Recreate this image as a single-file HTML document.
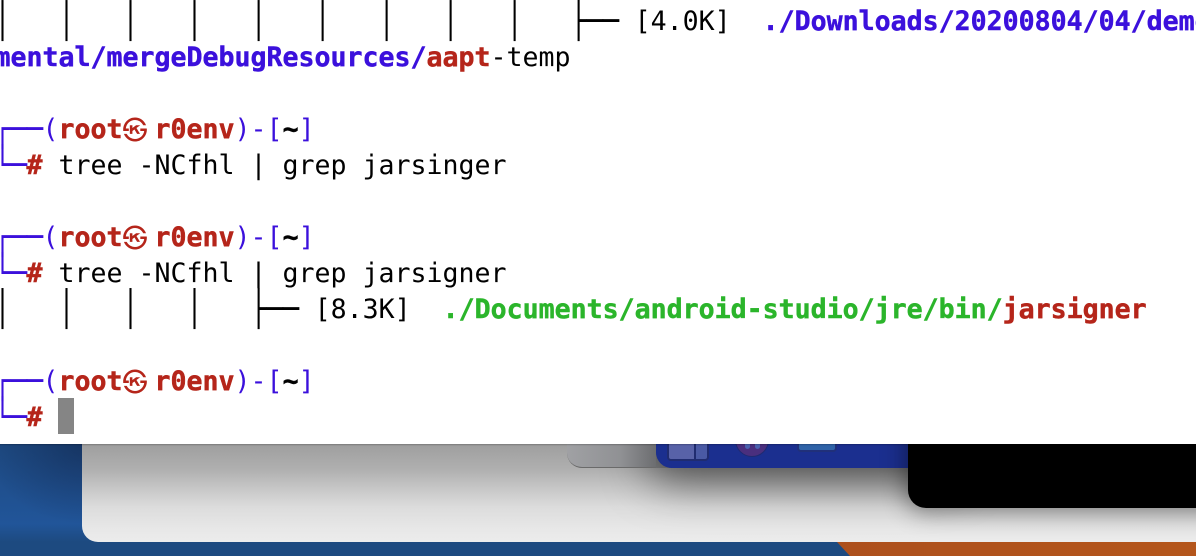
<!DOCTYPE html>
<html><head><meta charset="utf-8">
<style>
html,body{margin:0;padding:0;width:1196px;height:556px;overflow:hidden;background:#1f4a82}
.abs{position:absolute}
#blue{left:0;top:444px;width:1196px;height:112px;background:radial-gradient(ellipse 100px 80px at 85px 0,rgba(10,20,50,.4),rgba(10,20,50,0)),linear-gradient(180deg,#1e4a82 0,#215599 80px,#1d4a80 98px)}
#orange{left:0;top:542px;width:1196px;height:14px;background:linear-gradient(90deg,#9c421f,#b4561c);clip-path:polygon(837px 0,1196px 0,1196px 14px,850px 14px)}
#card{left:82px;top:380px;width:1200px;height:162px;border-radius:16px;overflow:hidden;background:linear-gradient(180deg,#9e9e9e 0,#9e9e9e 64px,#b0b0b0 90px,#c5c5c5 107px,#dcdcdc 127px,#e8e8e8 150px,#ececec 162px)}
#win{left:-20px;top:-20px;width:1300px;height:464px;background:#fff;border-radius:0 0 10px 10px;box-shadow:0 0 2px rgba(0,0,0,.55)}
.t{position:absolute;left:-5.5px;white-space:pre;height:36px;font:26.6px/36px "DejaVu Sans Mono","Liberation Mono",monospace;color:#000;letter-spacing:-.01px}
.b{font-weight:bold;-webkit-text-stroke:.45px currentColor}
.p{color:#3b10dc}.r{color:#b5251a}.g{color:#2bb52b}
.bx{display:inline-block;width:16px;transform:scaleY(1.3);font-weight:normal}
.bx.h{transform:scale(1.02,1.3)}
.k{display:inline-block;width:32px;height:0;text-align:left;font:bold 25px/0 "Noto Sans CJK JP",sans-serif;color:#b5251a;letter-spacing:0;text-indent:0;position:relative;top:1px}
#cur{left:58px;top:398px;width:16px;height:36px;background:#858585}
</style></head><body>
<div class="abs" id="blue"></div>
<div class="abs" id="orange"></div>
<div class="abs" id="card">
  <div class="abs" style="left:486px;top:-20px;width:400px;height:108px;border-radius:15px;background:#8e8f92"></div>
  <div class="abs" style="left:574px;top:-20px;width:300px;height:108px;border-radius:16px;background:#1b2f8f;box-shadow:0 6px 44px 8px rgba(0,0,0,.55)"></div>
  <div class="abs" style="left:485px;top:-20px;width:89px;height:108px;border-radius:15px 0 0 15px;background:linear-gradient(90deg,#a0a1a4,#909194 60%,#6c6d70);border-bottom:1px solid #6a6a6a;box-sizing:border-box"></div>
  <div class="abs" style="left:574px;top:-20px;width:30px;height:108px;border-radius:16px 0 0 16px;background:#1b2f8f"></div>
  <div class="abs" style="left:585px;top:40px;width:42px;height:41px;box-sizing:border-box;border:2px solid #202c70;border-radius:4px;background:linear-gradient(90deg,#5862a8 0,#5862a8 66%,#202c70 66%,#202c70 71%,#4a5aa5 71%)"></div>
  <div class="abs" style="left:653px;top:43px;width:34px;height:34px;border-radius:50%;background:#4a2f7e;box-sizing:border-box;border:1px solid #1f2a70"></div>
  <div class="abs" style="left:663px;top:60px;width:5px;height:9px;border-radius:3px;background:#4a62b0"></div>
  <div class="abs" style="left:673px;top:60px;width:5px;height:9px;border-radius:3px;background:#4a62b0"></div>
  <div class="abs" style="left:715px;top:40px;width:40px;height:32px;box-sizing:border-box;border:2px solid #20307a;border-radius:4px;background:#2f63a8"></div>
  <div class="abs" style="left:826px;top:-20px;width:420px;height:148px;border-radius:18px;background:#000;box-shadow:0 2px 24px 2px rgba(0,0,0,.45)"></div>
</div>
<div class="abs" id="win"></div>
<div class="t" style="top:4px"><span class="bx">│</span>   <span class="bx">│</span>   <span class="bx">│</span>   <span class="bx">│</span>   <span class="bx">│</span>   <span class="bx">│</span>   <span class="bx">│</span>   <span class="bx">│</span>   <span class="bx">│</span>   <span class="bx">├</span><span class="bx h">─</span><span class="bx h">─</span> [4.0K]  <span class="b p">./Downloads/20200804/04/demo</span></div>
<div class="t" style="top:40px"><span class="b p">mental/mergeDebugResources/</span><span class="b r">aapt</span>-temp</div>
<div class="t" style="top:112px"><span class="bx p">┌</span><span class="bx h p">─</span><span class="bx h p">─</span><span class="p">(</span><span class="b r">root</span><span class="k">㉿</span><span class="b r">r0env</span><span class="p">)-[</span><span class="b">~</span><span class="p">]</span></div>
<div class="t" style="top:148px"><span class="bx p">└</span><span class="bx h p">─</span><span class="b r">#</span> tree -NCfhl | grep jarsinger</div>
<div class="t" style="top:220px"><span class="bx p">┌</span><span class="bx h p">─</span><span class="bx h p">─</span><span class="p">(</span><span class="b r">root</span><span class="k">㉿</span><span class="b r">r0env</span><span class="p">)-[</span><span class="b">~</span><span class="p">]</span></div>
<div class="t" style="top:256px"><span class="bx p">└</span><span class="bx h p">─</span><span class="b r">#</span> tree -NCfhl | grep jarsigner</div>
<div class="t" style="top:292px"><span class="bx">│</span>   <span class="bx">│</span>   <span class="bx">│</span>   <span class="bx">│</span>   <span class="bx">├</span><span class="bx h">─</span><span class="bx h">─</span> [8.3K]  <span class="b g">./Documents/android-studio/jre/bin/</span><span class="b r">jarsigner</span></div>
<div class="t" style="top:364px"><span class="bx p">┌</span><span class="bx h p">─</span><span class="bx h p">─</span><span class="p">(</span><span class="b r">root</span><span class="k">㉿</span><span class="b r">r0env</span><span class="p">)-[</span><span class="b">~</span><span class="p">]</span></div>
<div class="t" style="top:400px"><span class="bx p">└</span><span class="bx h p">─</span><span class="b r">#</span></div>
<div class="abs" id="cur"></div>
</body></html>
